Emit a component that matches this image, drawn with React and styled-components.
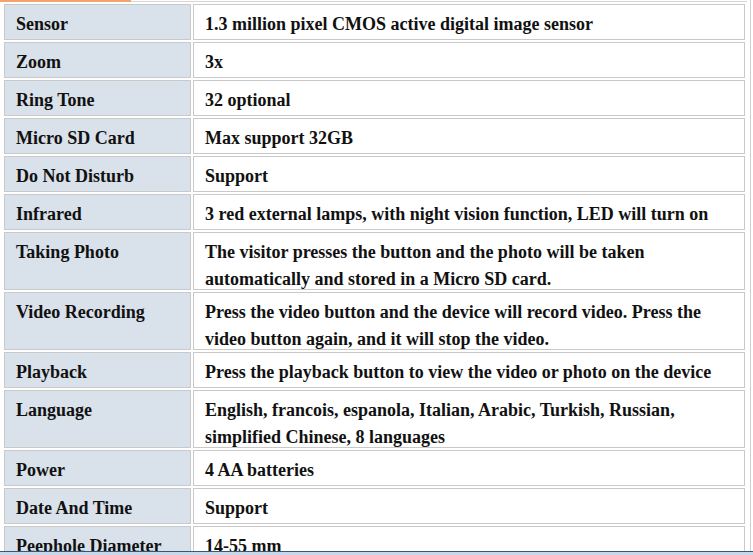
import React from 'react';
import styled, { createGlobalStyle } from 'styled-components';

const GlobalStyle = createGlobalStyle`
  html, body {
    margin: 0;
    padding: 0;
    background: #ffffff;
  }
`;

const Page = styled.div`
  position: relative;
  width: 753px;
  height: 555px;
  overflow: hidden;
  background: #ffffff;
`;

const Frame = styled.div`
  width: 751px;
  height: 555px;
  border-right: 1px solid #cfcfcf;
  padding-top: 1px;
  box-sizing: border-box;
`;

const AccentBar = styled.div`
  position: absolute;
  left: 0;
  top: 0;
  width: 131px;
  height: 2px;
  background: #f3a46c;
`;

const SpecTable = styled.table`
  margin-left: 2px;
  width: 745px;
  border-collapse: separate;
  border-spacing: 2px;
  border-top: 1px solid #d6d6d6;
  table-layout: fixed;
  font-family: "Liberation Serif", "Times New Roman", serif;
  font-weight: bold;
  font-size: 18px;
  color: #111111;
`;

const Cell = styled.td`
  border: 1px solid #c9c9c9;
  padding: 6px 8px 6px 11px;
  vertical-align: top;
  background: ${(p) => (p.$label ? '#d9e1eb' : '#ffffff')};
  width: ${(p) => (p.$label ? '166px' : 'auto')};
`;

/* lines sit 27px apart but each line only adds 22px to the row */
const Text = styled.div`
  line-height: 27px;
  height: ${(p) => p.$lines * 22}px;
`;

const BottomEdge = styled.div`
  position: absolute;
  left: 0;
  right: 0;
  bottom: 0;
  height: 3px;
  border-top: 1px solid #3d5670;
  background: #c6d9ec;
`;

const specs = [
  ['Sensor', '1.3 million pixel CMOS active digital image sensor', 1],
  ['Zoom', '3x', 1],
  ['Ring Tone', '32 optional', 1],
  ['Micro SD Card', 'Max support 32GB', 1],
  ['Do Not Disturb', 'Support', 1],
  ['Infrared', '3 red external lamps, with night vision function, LED will turn on', 1],
  ['Taking Photo', 'The visitor presses the button and the photo will be taken automatically and stored in a Micro SD card.', 2],
  ['Video Recording', 'Press the video button and the device will record video. Press the video button again, and it will stop the video.', 2],
  ['Playback', 'Press the playback button to view the video or photo on the device', 1],
  ['Language', 'English, francois, espanola, Italian, Arabic, Turkish, Russian, simplified Chinese, 8 languages', 2],
  ['Power', '4 AA batteries', 1],
  ['Date And Time', 'Support', 1],
  ['Peephole Diameter', '14-55 mm', 1],
];

export default function App() {
  return (
    <Page>
      <GlobalStyle />
      <Frame>
        <SpecTable>
          <tbody>
            {specs.map(([name, value, lines]) => (
              <tr key={name}>
                <Cell $label>
                  <Text $lines={1}>{name}</Text>
                </Cell>
                <Cell>
                  <Text $lines={lines}>{value}</Text>
                </Cell>
              </tr>
            ))}
          </tbody>
        </SpecTable>
      </Frame>
      <AccentBar />
      <BottomEdge />
    </Page>
  );
}
